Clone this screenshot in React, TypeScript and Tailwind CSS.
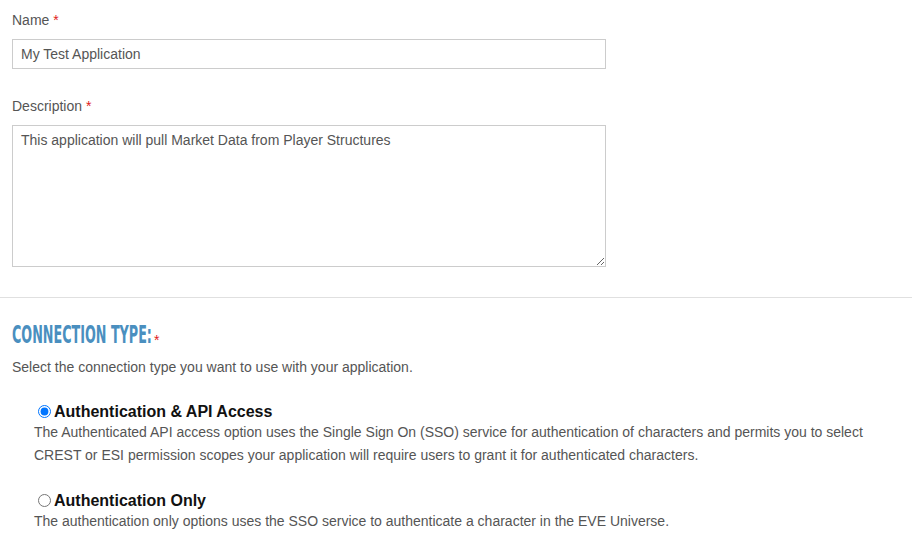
import React, { useState } from "react"

function Required() {
  return <span className="text-[#e02020] ml-1">*</span>
}

function ConnectionOption({
  checked,
  onSelect,
  title,
  children,
}: {
  checked: boolean
  onSelect: () => void
  title: string
  children: React.ReactNode
}) {
  return (
    <div className="pl-[22px]">
      <label className="flex items-center gap-[3px] cursor-pointer">
        <input
          type="radio"
          name="connection"
          checked={checked}
          onChange={onSelect}
          className="ml-[4px] w-[13px] h-[13px] m-0 accent-[#0075ff]"
        />
        <span className="text-[16px] font-bold text-[#111] leading-[19px]">{title}</span>
      </label>
      <p className="text-[14px] text-[#555] leading-[23px]">{children}</p>
    </div>
  )
}

export default function App() {
  const [conn, setConn] = useState("api")

  return (
    <div className="w-[920px] h-[548px] bg-white overflow-hidden font-['Liberation_Sans',Arial,sans-serif] text-[#555]">
      <div className="px-3 pt-[11px]">
        <label className="block text-[14px] leading-[18px]">
          Name
          <Required />
        </label>
        <input
          defaultValue="My Test Application"
          className="mt-[10px] block w-[594px] h-[30px] border border-[#ccc] px-[8px] text-[14px] text-[#555] outline-none"
        />

        <label className="block mt-[28px] text-[14px] leading-[18px]">
          Description
          <Required />
        </label>
        <textarea
          defaultValue="This application will pull Market Data from Player Structures"
          className="mt-[10px] block w-[594px] h-[142px] border border-[#ccc] px-[8px] py-[4px] text-[14px] leading-[20px] text-[#555] outline-none"
        />
      </div>

      <hr className="mt-[30px] w-[912px] border-0 border-t border-[#e0e0e0]" />

      <div className="px-3 pt-[24px]">
        <h2 className="flex items-baseline">
          <span className="inline-block w-[141px] whitespace-nowrap">
            <span className="inline-block whitespace-nowrap font-['DejaVu_Sans_Condensed','DejaVu_Sans',sans-serif] font-semibold text-[24px] leading-[26px] text-[#4a8fbf] [transform:scaleX(0.59)] origin-left">
              CONNECTION TYPE:
            </span>
          </span>
          <span className="text-[#e02020] text-[14px] ml-[1px] relative top-[2px]">*</span>
        </h2>
        <p className="mt-[8px] text-[14px] leading-[18px]">Select the connection type you want to use with your application.</p>
      </div>

      <div className="mt-[26px] px-3 flex flex-col gap-[24px]">
        <ConnectionOption checked={conn === "api"} onSelect={() => setConn("api")} title="Authentication & API Access">
          The Authenticated API access option uses the Single Sign On (SSO) service for authentication of characters and permits you to select
          <br />
          CREST or ESI permission scopes your application will require users to grant it for authenticated characters.
        </ConnectionOption>
        <ConnectionOption checked={conn === "auth"} onSelect={() => setConn("auth")} title="Authentication Only">
          The authentication only options uses the SSO service to authenticate a character in the EVE Universe.
        </ConnectionOption>
      </div>
    </div>
  )
}
